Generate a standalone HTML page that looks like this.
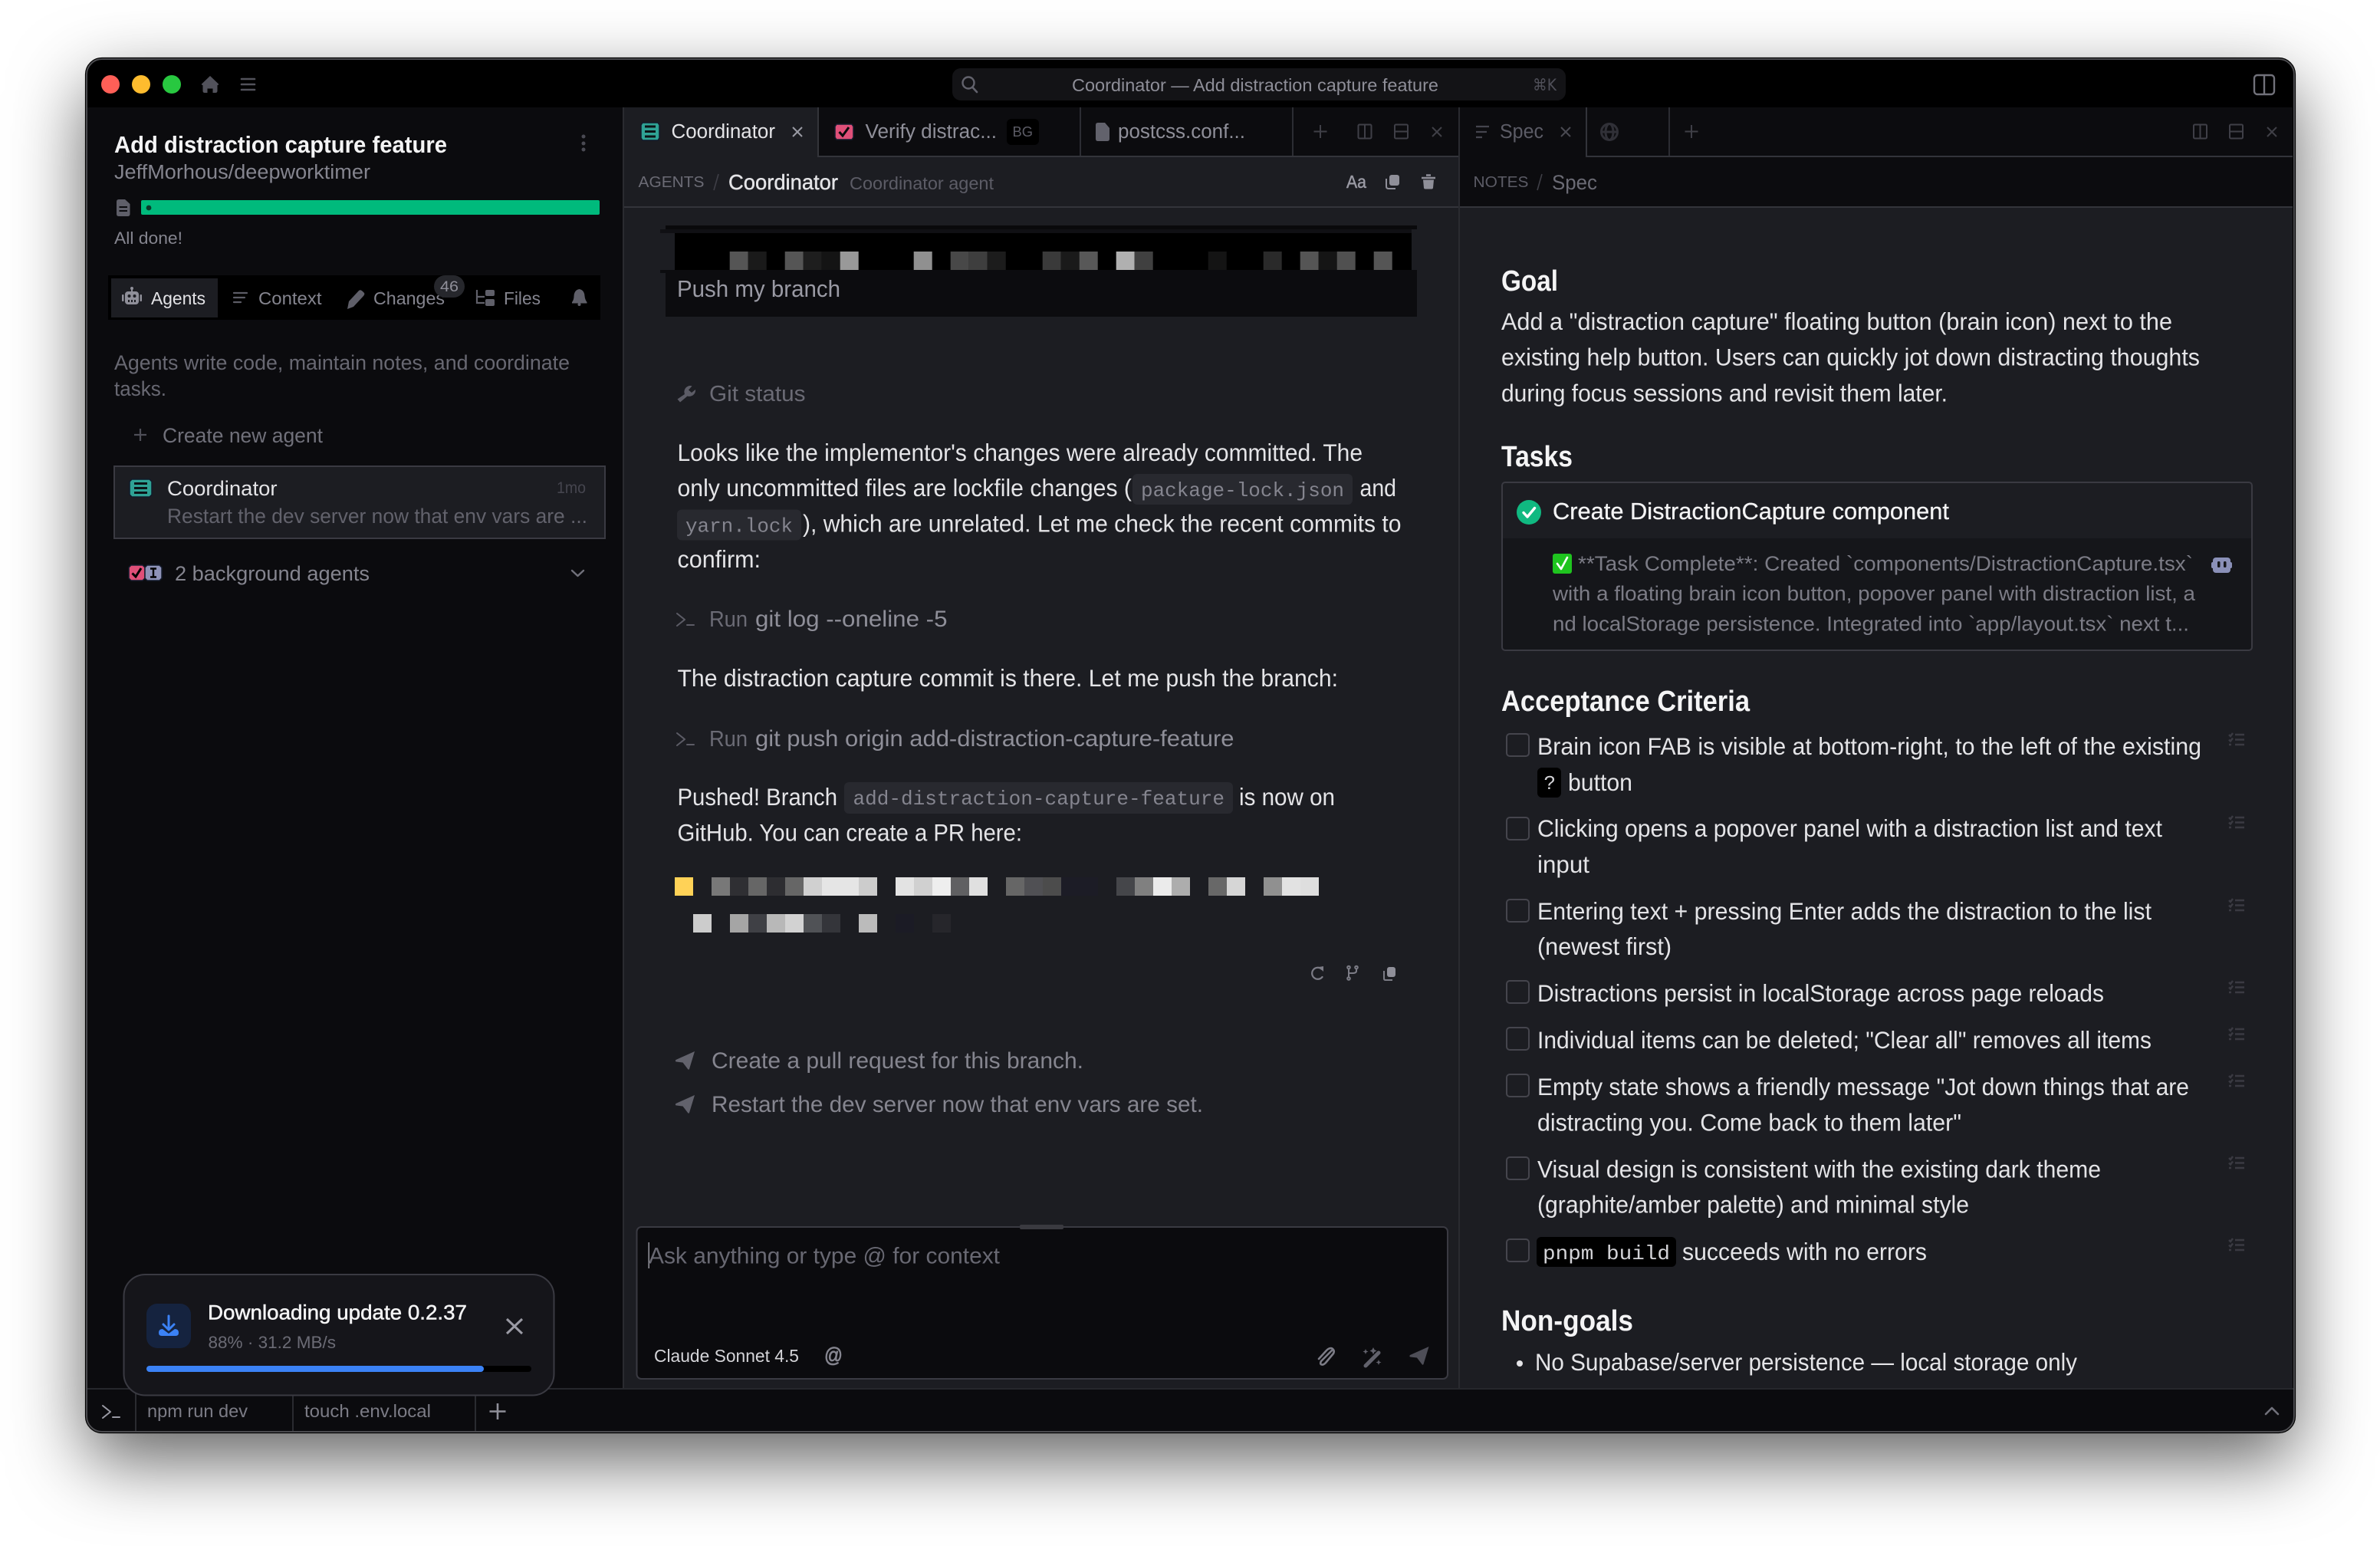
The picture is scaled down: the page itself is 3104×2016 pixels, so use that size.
<!DOCTYPE html>
<html lang="en"><head><meta charset="utf-8"><title>Coordinator — Add distraction capture feature</title>
<style>
html,body{margin:0;padding:0;background:#fff;width:3104px;height:2016px;overflow:hidden}
#shadow{position:absolute;left:112px;top:76px;width:2881px;height:1792px;border-radius:22px;box-shadow:0 36px 95px rgba(0,0,0,.62)}
svg{position:absolute;left:0;top:0}
text{font-family:"Liberation Sans",sans-serif;white-space:pre}
.m{font-family:"Liberation Mono",monospace}
.b{font-size:31.5px;fill:#e4e4e7}
.h{font-size:38px;font-weight:700;fill:#f4f4f5}
.s{font-size:27px;fill:#7c7c86}
.l{fill:none;stroke-linecap:round;stroke-linejoin:round}
</style></head><body>
<div id="shadow"></div>
<svg width="3104" height="2016" viewBox="0 0 3104 2016" xmlns="http://www.w3.org/2000/svg">
<defs>
<clipPath id="wc"><rect x="112" y="76" width="2881" height="1792" rx="21"/></clipPath>
<g id="splitv" fill="none" stroke="#3f3f47" stroke-width="2"><rect x="1" y="1" width="17" height="18" rx="1.5"/><path d="M9.5 1V19"/></g>
<g id="splith" fill="none" stroke="#3f3f47" stroke-width="2"><rect x="1" y="1" width="17" height="18" rx="1.5"/><path d="M1 10H18"/></g>
<path id="plane" d="M25 0 L0.5 11 Q-1 13 1 13.5 L9.5 14.5 L16 23 Q17 24.5 18 23 Z"/>
<g id="term" class="l" stroke-width="2"><path d="M0 0L10 8L0 16"/><path d="M13 15H22"/></g>
<g id="tasklist" fill="none" stroke="#3a3a42" stroke-width="2.4"><path d="M9 3H21M9 9.5H21M9 16H21"/><path d="M1 3l2 2 3-4M1 9.5l2 2 3-4M1 16h3"/></g>
<rect id="cb" width="29" height="29" rx="4" x="0" y="0" fill="none" stroke="#45454d" stroke-width="2"/>
</defs>
<g clip-path="url(#wc)">
<rect x="112" y="76" width="2881" height="1792" fill="#000"/>
<!-- Title bar -->
<circle cx="144" cy="110" r="12" fill="#ff5f57"/><circle cx="184" cy="110" r="12" fill="#febc2e"/><circle cx="224" cy="110" r="12" fill="#28c840"/>
<path d="M274 99 L285 109.5 Q285.5 111 283.5 111 V118.5 Q283.5 121 281 121 H277.5 V115.5 H270.5 V121 H267 Q264.5 121 264.5 118.5 V111 Q262.5 111 263 109.5 Z" fill="#52525b"/>
<path d="M315 103H332M315 110H332M315 117H332" stroke="#52525b" stroke-width="2.6" stroke-linecap="round"/>
<rect x="1242" y="89" width="800" height="42" rx="11" fill="#131316"/>
<circle cx="1263" cy="108" r="7.5" fill="none" stroke="#62626c" stroke-width="2.4"/><path d="M1268.5 114L1274 120" stroke="#62626c" stroke-width="2.6" stroke-linecap="round"/>
<text x="1398" y="119" font-size="23.5" fill="#8e8e98" textLength="478" lengthAdjust="spacingAndGlyphs">Coordinator — Add distraction capture feature</text>
<text x="1999" y="118" font-size="21" fill="#4f4f58" style="font-family:'DejaVu Sans',sans-serif" textLength="31" lengthAdjust="spacingAndGlyphs">⌘K</text>
<rect x="2940" y="98" width="26" height="25" rx="4" fill="none" stroke="#71717a" stroke-width="2.4"/><path d="M2953 98V123" stroke="#71717a" stroke-width="2.4"/>
<!-- Sidebar -->
<rect x="112" y="140" width="700" height="1670" fill="#0b0b0e"/>
<rect x="812" y="140" width="2" height="1670" fill="#2a2b30"/>
<text x="149" y="199" font-size="30.5" font-weight="700" fill="#f4f4f5" textLength="434" lengthAdjust="spacingAndGlyphs">Add distraction capture feature</text>
<text x="149" y="233" font-size="25.5" fill="#85858f" textLength="334" lengthAdjust="spacingAndGlyphs">JeffMorhous/deepworktimer</text>
<circle cx="761" cy="178" r="2.5" fill="#4a4a53"/><circle cx="761" cy="187" r="2.5" fill="#4a4a53"/><circle cx="761" cy="195" r="2.5" fill="#4a4a53"/>
<path d="M155 260 H163 L169.5 266 V279 Q169.5 282 166.5 282 H155 Q152 282 152 279 V263 Q152 260 155 260Z" fill="#5f5f69"/><path d="M155.5 270H166M155.5 275H166" stroke="#0b0b0e" stroke-width="2"/>
<rect x="184" y="261" width="598" height="19" rx="2" fill="#00ba7c"/>
<circle cx="194" cy="271" r="3.4" fill="#0b3a2a"/>
<text x="149" y="318" font-size="22.5" fill="#85858f" textLength="89" lengthAdjust="spacingAndGlyphs">All done!</text>
<rect x="141" y="359" width="642" height="58" fill="#000"/>
<rect x="145" y="363" width="139" height="51" fill="#1c1d22"/>
<!-- robot -->
<g fill="#8f8f99"><rect x="163" y="380" width="18" height="17" rx="4"/><rect x="159" y="384" width="2.5" height="9" rx="1"/><rect x="182.5" y="384" width="2.5" height="9" rx="1"/><rect x="171" y="376" width="2" height="5"/><circle cx="172" cy="376" r="2"/></g>
<g fill="#1c1d22"><circle cx="168.5" cy="386" r="2"/><circle cx="175.5" cy="386" r="2"/><rect x="167" y="391" width="2" height="3"/><rect x="171" y="391" width="2" height="3"/><rect x="175" y="391" width="2" height="3"/></g>
<text x="197" y="397" font-size="23.5" fill="#e4e4e7" textLength="71" lengthAdjust="spacingAndGlyphs">Agents</text>
<path d="M305 382H322M305 388H319M305 394H314" stroke="#5c5c66" stroke-width="2.2" stroke-linecap="round"/>
<text x="337" y="397" font-size="23.5" fill="#85858f" textLength="82.5" lengthAdjust="spacingAndGlyphs">Context</text>
<path d="M453 403 L455 393 L468 379 Q470 377 473 380 L475 382 Q476 384 474 386 L461 400 Z" fill="#5f5f69"/>
<text x="487" y="397" font-size="23.5" fill="#85858f" textLength="93" lengthAdjust="spacingAndGlyphs">Changes</text>
<rect x="566" y="359" width="40" height="29" rx="14.5" fill="#26272c"/>
<text x="574" y="380" font-size="19" fill="#8f8f99" textLength="24" lengthAdjust="spacingAndGlyphs">46</text>
<path d="M622 378V395H632M622 387H632" fill="none" stroke="#5f5f69" stroke-width="2.2"/><rect x="633" y="378" width="12" height="8" rx="2" fill="#5f5f69"/><rect x="633" y="390" width="12" height="9" rx="2" fill="#5f5f69"/>
<text x="657" y="397" font-size="23.5" fill="#85858f" textLength="48" lengthAdjust="spacingAndGlyphs">Files</text>
<path d="M755.5 377 Q762 378 762.5 386 Q763 391 765.5 394 V395.5 H746 V394 Q748.5 391 748.5 386 Q749 378 755.5 377Z" fill="#5f5f69"/><circle cx="755.5" cy="397" r="2" fill="#5f5f69"/>
<text x="149" y="482" font-size="27" fill="#686872" textLength="594" lengthAdjust="spacingAndGlyphs">Agents write code, maintain notes, and coordinate</text>
<text x="149" y="516" font-size="27" fill="#686872" textLength="68" lengthAdjust="spacingAndGlyphs">tasks.</text>
<path d="M183 559V575M175 567H191" stroke="#4e4e57" stroke-width="2.2"/>
<text x="212" y="577" font-size="26.5" fill="#70707a" textLength="209" lengthAdjust="spacingAndGlyphs">Create new agent</text>
<rect x="149" y="608" width="640" height="94" fill="#1c1d22" stroke="#3a3a42" stroke-width="2"/>
<path d="M172 625H195L198 628V645L195 648H172L169 645V628Z" fill="#2fa295" stroke="#111a2a" stroke-width="1.5"/>
<path d="M175 630.5H192M175 636.5H192M175 642.5H192" stroke="#0c1418" stroke-width="3"/>
<text x="218" y="646" font-size="26.5" fill="#e4e4e7" textLength="143.5" lengthAdjust="spacingAndGlyphs">Coordinator</text>
<text x="726" y="643" font-size="21.5" fill="#45454e" textLength="38" lengthAdjust="spacingAndGlyphs">1mo</text>
<text x="218" y="682" font-size="26.5" fill="#62626c" textLength="548" lengthAdjust="spacingAndGlyphs">Restart the dev server now that env vars are ...</text>
<path d="M171 737H186L189 740V754L186 757H171L168 754V740Z" fill="#df4f78" stroke="#151c2e" stroke-width="1.5"/>
<path d="M172.5 747.5L177 752L184 741" fill="none" stroke="#000" stroke-width="3"/>
<path d="M192 737H208L211 740V754L208 757H192L189 754V740Z" fill="#8f93b8" stroke="#151c2e" stroke-width="1.5"/>
<path d="M196 741.5H204M200 741.5V752.5M196 752.5H204" fill="none" stroke="#000" stroke-width="2.4"/>
<text x="228" y="757" font-size="26.5" fill="#85858f" textLength="254" lengthAdjust="spacingAndGlyphs">2 background agents</text>
<path class="l" d="M746 744L753.5 751L761 744" stroke="#70707a" stroke-width="2.4"/>
<!-- Center panel -->
<rect x="814" y="140" width="1088" height="1670" fill="#1c1d22"/>
<rect x="1066" y="140" width="836" height="63" fill="#0c0c0f"/>
<rect x="1066" y="140" width="2" height="64" fill="#33343a"/><rect x="1408" y="140" width="2" height="64" fill="#2c2d33"/><rect x="1685" y="140" width="2" height="64" fill="#2c2d33"/>
<rect x="1066" y="203" width="838" height="2" fill="#33343a"/>
<rect x="814" y="269" width="2176" height="2" fill="#33343a"/>
<rect x="1902" y="140" width="2" height="1670" fill="#2a2b30"/>
<path d="M838 160H858L860 163V180L858 183H838L836 180V163Z" fill="#2fa295" stroke="#111a2a" stroke-width="1.5"/>
<path d="M841 165H855M841 171.5H855M841 178H855" stroke="#0c1418" stroke-width="3"/>
<text x="875.5" y="180" font-size="25.5" fill="#e4e4e7" textLength="135.5" lengthAdjust="spacingAndGlyphs">Coordinator</text>
<path d="M1034 166L1046 178M1046 166L1034 178" stroke="#9a9aa4" stroke-width="2"/>
<path d="M1091 162H1111L1113 165V179L1111 182H1091L1089 179V165Z" fill="#df4f78" stroke="#151c2e" stroke-width="1.5"/>
<path d="M1094.5 172L1099 177L1107 166" fill="none" stroke="#0a0a0c" stroke-width="3"/>
<text x="1128.5" y="180" font-size="25.5" fill="#8f8f99" textLength="171.5" lengthAdjust="spacingAndGlyphs">Verify distrac...</text>
<rect x="1313" y="155" width="42" height="34" rx="6" fill="#000"/>
<text x="1320.5" y="178" font-size="18" fill="#5c5c66" textLength="26.5" lengthAdjust="spacingAndGlyphs">BG</text>
<path d="M1432 160H1441L1447 167V181Q1447 184 1444 184H1432Q1429 184 1429 181V163Q1429 160 1432 160Z" fill="#62626c"/>
<text x="1458" y="180" font-size="25.5" fill="#8f8f99" textLength="166" lengthAdjust="spacingAndGlyphs">postcss.conf...</text>
<path d="M1722 163V180M1713.5 171.5H1730.5" stroke="#3f3f47" stroke-width="2"/>
<use href="#splitv" x="1770.5" y="161.5"/><use href="#splith" x="1818" y="161.5"/>
<path d="M1868 166L1880 178M1880 166L1868 178" stroke="#3f3f47" stroke-width="2"/>
<!-- Breadcrumb center -->
<text x="832.5" y="244" font-size="20.5" fill="#6b6b75" textLength="86" lengthAdjust="spacingAndGlyphs">AGENTS</text>
<path d="M937 227L931 248" stroke="#3f3f47" stroke-width="1.6"/>
<text x="950" y="247" font-size="27.5" fill="#e4e4e7" stroke="#e4e4e7" stroke-width=".4" textLength="143" lengthAdjust="spacingAndGlyphs">Coordinator</text>
<text x="1108" y="247" font-size="23" fill="#5c5c66" textLength="188" lengthAdjust="spacingAndGlyphs">Coordinator agent</text>
<text x="1756" y="245" font-size="23" fill="#9a9aa4" stroke="#9a9aa4" stroke-width=".5" textLength="26" lengthAdjust="spacingAndGlyphs">Aa</text>
<rect x="1812" y="228" width="13" height="14" rx="3" fill="#8f8f99"/><path d="M1808 233V243Q1808 246 1811 246H1820" fill="none" stroke="#8f8f99" stroke-width="2"/>
<path d="M1854 232H1872M1860 228.5H1866" stroke="#8f8f99" stroke-width="2.4"/><path d="M1856 234.5H1870L1869 245Q1868.8 246.5 1867 246.5H1859Q1857.2 246.5 1857 245Z" fill="#8f8f99"/>
<!-- User message -->
<rect x="868" y="294" width="980" height="5" fill="#09090b"/>
<rect x="861" y="299" width="980" height="5" fill="#101014"/>
<rect x="880" y="304" width="961" height="48" fill="#000"/>
<rect x="868" y="352" width="980" height="61" fill="#0c0c0f"/>
<rect x="861" y="352" width="7" height="4" fill="#0c0c0f"/>
<g>
<rect x="951.7" y="328" width="24" height="24" fill="#555"/><rect x="975.7" y="328" width="24" height="24" fill="#1a1a1a"/>
<rect x="1023.7" y="328" width="24" height="24" fill="#555"/><rect x="1047.7" y="328" width="24" height="24" fill="#1e1e1e"/><rect x="1071.7" y="328" width="24" height="24" fill="#141414"/><rect x="1095.7" y="328" width="24" height="24" fill="#999"/>
<rect x="1191.7" y="328" width="24" height="24" fill="#909090"/>
<rect x="1239.7" y="328" width="24" height="24" fill="#484848"/><rect x="1263.7" y="328" width="24" height="24" fill="#3e3e3e"/><rect x="1287.7" y="328" width="24" height="24" fill="#1c1c1c"/>
<rect x="1359.7" y="328" width="24" height="24" fill="#3a3a3a"/><rect x="1383.7" y="328" width="24" height="24" fill="#1a1a1a"/><rect x="1407.7" y="328" width="24" height="24" fill="#585858"/>
<rect x="1455.7" y="328" width="24" height="24" fill="#b0b0b0"/><rect x="1479.7" y="328" width="24" height="24" fill="#404040"/>
<rect x="1575.7" y="328" width="24" height="24" fill="#141414"/>
<rect x="1647.7" y="328" width="24" height="24" fill="#2a2a2a"/>
<rect x="1695.7" y="328" width="24" height="24" fill="#555"/><rect x="1719.7" y="328" width="24" height="24" fill="#151515"/><rect x="1743.7" y="328" width="24" height="24" fill="#505050"/>
<rect x="1791.7" y="328" width="24" height="24" fill="#555"/>
</g>
<text x="883" y="387" font-size="30.5" fill="#9a9aa4" textLength="213" lengthAdjust="spacingAndGlyphs">Push my branch</text>
<!-- Chat -->
<path d="M901 503 A8 8 0 0 0 893 514 L883.5 520.5 L887 524.5 L896.5 516.5 A8 8 0 0 0 907 508 L902 512 L898 508.5 L902.5 503.5 Z" fill="#5c5c66"/>
<text x="925" y="523" font-size="29" fill="#6b6b75" textLength="125.5" lengthAdjust="spacingAndGlyphs">Git status</text>
<text x="883.5" y="601" class="b" textLength="893.5" lengthAdjust="spacingAndGlyphs">Looks like the implementor's changes were already committed. The</text>
<text x="883.5" y="647" class="b" textLength="592.5" lengthAdjust="spacingAndGlyphs">only uncommitted files are lockfile changes (</text>
<rect x="1477" y="618" width="287" height="40" rx="6" fill="#28292f"/>
<text x="1488" y="647" class="m" font-size="26" fill="#85858f" textLength="265" lengthAdjust="spacingAndGlyphs">package-lock.json</text>
<text x="1773.5" y="647" class="b" textLength="47.5" lengthAdjust="spacingAndGlyphs">and</text>
<rect x="883" y="664.5" width="162" height="40" rx="6" fill="#28292f"/>
<text x="894" y="693.5" class="m" font-size="26" fill="#85858f" textLength="140" lengthAdjust="spacingAndGlyphs">yarn.lock</text>
<text x="1047" y="693.5" class="b" textLength="780.5" lengthAdjust="spacingAndGlyphs">), which are unrelated. Let me check the recent commits to</text>
<text x="883.5" y="740" class="b" textLength="108.5" lengthAdjust="spacingAndGlyphs">confirm:</text>
<use href="#term" x="883" y="800" stroke="#5c5c66"/>
<text x="925" y="817" font-size="29" fill="#6b6b75" textLength="50" lengthAdjust="spacingAndGlyphs">Run</text>
<text x="985" y="817" font-size="29.5" fill="#8f8f99" textLength="250.5" lengthAdjust="spacingAndGlyphs">git log --oneline -5</text>
<text x="883.5" y="895" class="b" textLength="861.5" lengthAdjust="spacingAndGlyphs">The distraction capture commit is there. Let me push the branch:</text>
<use href="#term" x="883" y="956" stroke="#5c5c66"/>
<text x="925" y="973" font-size="29" fill="#6b6b75" textLength="50" lengthAdjust="spacingAndGlyphs">Run</text>
<text x="985" y="973" font-size="29.5" fill="#8f8f99" textLength="624.5" lengthAdjust="spacingAndGlyphs">git push origin add-distraction-capture-feature</text>
<text x="883.5" y="1050" class="b" textLength="208.5" lengthAdjust="spacingAndGlyphs">Pushed! Branch</text>
<rect x="1101" y="1020" width="507" height="41" rx="6" fill="#28292f"/>
<text x="1112.5" y="1049" class="m" font-size="26" fill="#85858f" textLength="484.5" lengthAdjust="spacingAndGlyphs">add-distraction-capture-feature</text>
<text x="1616" y="1050" class="b" textLength="125" lengthAdjust="spacingAndGlyphs">is now on</text>
<text x="883.5" y="1096.5" class="b" textLength="449.5" lengthAdjust="spacingAndGlyphs">GitHub. You can create a PR here:</text>
<g>
<rect x="880" y="1144" width="24" height="24" fill="#ffd257"/>
<rect x="928" y="1144" width="24" height="24" fill="#787878"/><rect x="952" y="1144" width="24" height="24" fill="#2f2f33"/><rect x="976" y="1144" width="24" height="24" fill="#666"/><rect x="1000" y="1144" width="24" height="24" fill="#2d2d31"/><rect x="1024" y="1144" width="24" height="24" fill="#666"/><rect x="1048" y="1144" width="24" height="24" fill="#d0d0d0"/><rect x="1072" y="1144" width="24" height="24" fill="#e5e5e5"/><rect x="1096" y="1144" width="24" height="24" fill="#e5e5e5"/><rect x="1120" y="1144" width="24" height="24" fill="#ccc"/>
<rect x="1168" y="1144" width="24" height="24" fill="#e3e3e3"/><rect x="1192" y="1144" width="24" height="24" fill="#d0d0d0"/><rect x="1216" y="1144" width="24" height="24" fill="#eee"/><rect x="1240" y="1144" width="24" height="24" fill="#606062"/><rect x="1264" y="1144" width="24" height="24" fill="#e0e0e0"/>
<rect x="1312" y="1144" width="24" height="24" fill="#666"/><rect x="1336" y="1144" width="24" height="24" fill="#505054"/><rect x="1360" y="1144" width="24" height="24" fill="#4c4c4c"/><rect x="1384" y="1144" width="48" height="24" fill="#1c1c26"/>
<rect x="1456" y="1144" width="24" height="24" fill="#45464a"/><rect x="1480" y="1144" width="24" height="24" fill="#808080"/><rect x="1504" y="1144" width="24" height="24" fill="#ebebeb"/><rect x="1528" y="1144" width="24" height="24" fill="#adadad"/>
<rect x="1576" y="1144" width="24" height="24" fill="#686868"/><rect x="1600" y="1144" width="24" height="24" fill="#d6d6d6"/>
<rect x="1648" y="1144" width="24" height="24" fill="#909090"/><rect x="1672" y="1144" width="24" height="24" fill="#e2e2e2"/><rect x="1696" y="1144" width="24" height="24" fill="#dedede"/>
<rect x="904" y="1192" width="24" height="24" fill="#ccc"/><rect x="952" y="1192" width="24" height="24" fill="#a5a5a5"/><rect x="976" y="1192" width="24" height="24" fill="#3f4045"/><rect x="1000" y="1192" width="24" height="24" fill="#b8b8b8"/><rect x="1024" y="1192" width="24" height="24" fill="#d2d2d2"/><rect x="1048" y="1192" width="24" height="24" fill="#505256"/><rect x="1072" y="1192" width="24" height="24" fill="#34353a"/><rect x="1120" y="1192" width="24" height="24" fill="#bbb"/><rect x="1168" y="1192" width="24" height="24" fill="#1b1b25"/><rect x="1216" y="1192" width="24" height="24" fill="#26262b"/>
</g>
<path class="l" d="M1724 1264 A7.5 7.5 0 1 0 1724.5 1274" stroke="#7c7c86" stroke-width="2.2"/><path d="M1720 1261L1726 1260V1267Z" fill="#7c7c86"/>
<g class="l" stroke="#7c7c86" stroke-width="2"><circle cx="1759" cy="1261.5" r="1.8"/><circle cx="1769" cy="1261.5" r="1.8"/><circle cx="1759" cy="1276" r="1.8"/><path d="M1759 1263.5V1274M1769 1263.5V1266Q1769 1269 1764 1269H1759"/></g>
<rect x="1809" y="1261" width="11" height="13" rx="3" fill="#8f8f99"/><path d="M1805 1266V1276Q1805 1278 1807 1278H1816" fill="none" stroke="#7c7c86" stroke-width="2"/>
<use href="#plane" x="881" y="1371" fill="#62626c"/>
<text x="928" y="1393" font-size="29.5" fill="#85858f" textLength="485" lengthAdjust="spacingAndGlyphs">Create a pull request for this branch.</text>
<use href="#plane" x="881" y="1428" fill="#62626c"/>
<text x="928" y="1450" font-size="29.5" fill="#85858f" textLength="641" lengthAdjust="spacingAndGlyphs">Restart the dev server now that env vars are set.</text>
<!-- Input -->
<rect x="830.5" y="1600" width="1057.5" height="198" rx="6" fill="#0b0b0e" stroke="#3a3a42" stroke-width="2"/>
<rect x="1330" y="1597" width="57" height="6" rx="2" fill="#3a3a40"/>
<rect x="845.5" y="1620" width="1.4" height="34" fill="#a1a1aa"/>
<text x="846" y="1647.5" font-size="29.5" fill="#686872" textLength="458" lengthAdjust="spacingAndGlyphs">Ask anything or type @ for context</text>
<text x="853" y="1776" font-size="23" fill="#d4d4d8" textLength="189" lengthAdjust="spacingAndGlyphs">Claude Sonnet 4.5</text>
<text x="1075" y="1776" font-size="27" fill="#85858f" stroke="#85858f" stroke-width=".8" textLength="24" lengthAdjust="spacingAndGlyphs">@</text>
<path class="l" d="M1737 1761 L1723 1775 Q1721 1779 1724 1779.5 Q1726 1780 1729 1777 L1739 1765 Q1741 1761 1737.5 1758.5 Q1734 1757 1730 1761 L1720 1772" stroke="#7c7c86" stroke-width="2.6"/>
<path d="M1781 1781L1798 1764" stroke="#62626c" stroke-width="5" stroke-linecap="round"/><path d="M1791 1757l1.5 3 3 1.5-3 1.5-1.5 3-1.5-3-3-1.5 3-1.5zM1781 1759l1 2.5 2.5 1-2.5 1-1 2.5-1-2.5-2.5-1 2.5-1zM1798 1773l1 2.5 2.5 1-2.5 1-1 2.5-1-2.5-2.5-1 2.5-1z" fill="#62626c"/>
<use href="#plane" x="1838.5" y="1756" fill="#4e4e57"/>
<!-- Right panel -->
<rect x="1904" y="140" width="1086" height="129" fill="#0c0c0f"/>
<rect x="1904" y="271" width="1086" height="1539" fill="#1c1d22"/>
<rect x="2068" y="140" width="2" height="64" fill="#33343a"/><rect x="2176" y="140" width="2" height="64" fill="#2c2d33"/>
<rect x="2068" y="203" width="922" height="2" fill="#33343a"/>
<path d="M1925 165H1942M1925 172H1939M1925 179H1933" stroke="#45454e" stroke-width="2.2"/>
<text x="1956" y="180" font-size="25.5" fill="#5c5c66" textLength="57" lengthAdjust="spacingAndGlyphs">Spec</text>
<path d="M2036 166L2048 178M2048 166L2036 178" stroke="#4a4a52" stroke-width="2"/>
<g fill="none" stroke="#303037" stroke-width="3"><circle cx="2099" cy="172" r="10.5"/><ellipse cx="2099" cy="172" rx="5" ry="10.5"/><path d="M2088 172H2110"/></g>
<path d="M2206 163V180M2197.5 171.5H2214.5" stroke="#3f3f47" stroke-width="2"/>
<use href="#splitv" x="2860" y="161.5"/><use href="#splith" x="2907" y="161.5"/>
<path d="M2957 166L2969 178M2969 166L2957 178" stroke="#3f3f47" stroke-width="2"/>
<text x="1921.5" y="244" font-size="20.5" fill="#5c5c66" textLength="72" lengthAdjust="spacingAndGlyphs">NOTES</text>
<path d="M2011 227L2005 248" stroke="#3f3f47" stroke-width="1.6"/>
<text x="2024" y="247" font-size="26.5" fill="#6b6b75" textLength="59" lengthAdjust="spacingAndGlyphs">Spec</text>
<text x="1958" y="379" class="h" textLength="74" lengthAdjust="spacingAndGlyphs">Goal</text>
<text x="1958" y="430" class="b" textLength="875" lengthAdjust="spacingAndGlyphs">Add a "distraction capture" floating button (brain icon) next to the</text>
<text x="1958" y="476.5" class="b" textLength="911" lengthAdjust="spacingAndGlyphs">existing help button. Users can quickly jot down distracting thoughts</text>
<text x="1958" y="523.5" class="b" textLength="582" lengthAdjust="spacingAndGlyphs">during focus sessions and revisit them later.</text>
<text x="1958" y="608" class="h" textLength="93" lengthAdjust="spacingAndGlyphs">Tasks</text>
<rect x="1959" y="629" width="978" height="219" rx="4" fill="#1c1d22"/>
<path d="M1959 702H2937V844Q2937 848 2933 848H1963Q1959 848 1959 844Z" fill="#15161a"/>
<rect x="1959" y="629" width="978" height="219" rx="4" fill="none" stroke="#3a3a42" stroke-width="2"/>
<circle cx="1994" cy="668" r="16" fill="#10b981"/><path class="l" d="M1987 668.5L1992 674L2001.5 662.5" stroke="#fff" stroke-width="3.4"/>
<text x="2025" y="677" font-size="30.5" fill="#f4f4f5" stroke="#f4f4f5" stroke-width=".3" textLength="517" lengthAdjust="spacingAndGlyphs">Create DistractionCapture component</text>
<rect x="2025" y="722" width="25" height="26" rx="3" fill="#1fc41f"/><path class="l" d="M2031 735L2036 742L2044 727" stroke="#fff" stroke-width="2.6"/>
<text x="2058" y="744" font-size="27" fill="#7c7c86" textLength="802" lengthAdjust="spacingAndGlyphs">**Task Complete**: Created `components/DistractionCapture.tsx`</text>
<rect x="2886" y="727" width="23" height="20" rx="4" fill="#8a90b8"/><rect x="2884" y="733" width="27" height="8" rx="2" fill="#8a90b8"/><rect x="2892" y="732" width="3.5" height="8" rx="1.5" fill="#15161a"/><rect x="2900" y="732" width="3.5" height="8" rx="1.5" fill="#15161a"/>
<text x="2025" y="783" font-size="27" fill="#7c7c86" textLength="838" lengthAdjust="spacingAndGlyphs">with a floating brain icon button, popover panel with distraction list, a</text>
<text x="2025" y="822.5" font-size="27" fill="#7c7c86" textLength="830" lengthAdjust="spacingAndGlyphs">nd localStorage persistence. Integrated into `app/layout.tsx` next t...</text>
<text x="1958" y="927" class="h" textLength="324" lengthAdjust="spacingAndGlyphs">Acceptance Criteria</text>
<use href="#cb" x="1965" y="957"/><use href="#tasklist" x="2906" y="955"/>
<text x="2005" y="984" class="b" textLength="866" lengthAdjust="spacingAndGlyphs">Brain icon FAB is visible at bottom-right, to the left of the existing</text>
<rect x="2005" y="1001" width="31" height="39" rx="6" fill="#000"/>
<text x="2013.5" y="1029" class="m" font-size="26" fill="#d4d4d8" textLength="15.5" lengthAdjust="spacingAndGlyphs">?</text>
<text x="2045" y="1031" class="b" textLength="84" lengthAdjust="spacingAndGlyphs">button</text>
<use href="#cb" x="1965" y="1066"/><use href="#tasklist" x="2906" y="1063"/>
<text x="2005" y="1091" class="b" textLength="815" lengthAdjust="spacingAndGlyphs">Clicking opens a popover panel with a distraction list and text</text>
<text x="2005" y="1138" class="b" textLength="68" lengthAdjust="spacingAndGlyphs">input</text>
<use href="#cb" x="1965" y="1173"/><use href="#tasklist" x="2906" y="1171"/>
<text x="2005" y="1199" class="b" textLength="801" lengthAdjust="spacingAndGlyphs">Entering text + pressing Enter adds the distraction to the list</text>
<text x="2005" y="1245" class="b" textLength="175" lengthAdjust="spacingAndGlyphs">(newest first)</text>
<use href="#cb" x="1965" y="1279"/><use href="#tasklist" x="2906" y="1278"/>
<text x="2005" y="1306" class="b" textLength="739" lengthAdjust="spacingAndGlyphs">Distractions persist in localStorage across page reloads</text>
<use href="#cb" x="1965" y="1340"/><use href="#tasklist" x="2906" y="1339"/>
<text x="2005" y="1367" class="b" textLength="801" lengthAdjust="spacingAndGlyphs">Individual items can be deleted; "Clear all" removes all items</text>
<use href="#cb" x="1965" y="1401"/><use href="#tasklist" x="2906" y="1400"/>
<text x="2005" y="1428" class="b" textLength="850" lengthAdjust="spacingAndGlyphs">Empty state shows a friendly message "Jot down things that are</text>
<text x="2005" y="1474.5" class="b" textLength="553" lengthAdjust="spacingAndGlyphs">distracting you. Come back to them later"</text>
<use href="#cb" x="1965" y="1509"/><use href="#tasklist" x="2906" y="1507"/>
<text x="2005" y="1535.5" class="b" textLength="735" lengthAdjust="spacingAndGlyphs">Visual design is consistent with the existing dark theme</text>
<text x="2005" y="1581.5" class="b" textLength="563" lengthAdjust="spacingAndGlyphs">(graphite/amber palette) and minimal style</text>
<use href="#cb" x="1965" y="1616"/><use href="#tasklist" x="2906" y="1614"/>
<rect x="2004" y="1613" width="182" height="39" rx="6" fill="#000"/>
<text x="2012" y="1642" class="m" font-size="26" fill="#d4d4d8" textLength="166" lengthAdjust="spacingAndGlyphs">pnpm build</text>
<text x="2194" y="1643" class="b" textLength="319" lengthAdjust="spacingAndGlyphs">succeeds with no errors</text>
<text x="1958" y="1735" class="h" textLength="172" lengthAdjust="spacingAndGlyphs">Non-goals</text>
<circle cx="1982" cy="1778" r="4" fill="#e4e4e7"/>
<text x="2002" y="1787" class="b" textLength="707" lengthAdjust="spacingAndGlyphs">No Supabase/server persistence — local storage only</text>
<!-- Terminal bar -->
<rect x="112" y="1810" width="2881" height="58" fill="#0b0b0e"/>
<rect x="112" y="1810" width="2881" height="2" fill="#26272c"/>
<use href="#term" x="134" y="1833" stroke="#9a9aa4"/>
<rect x="176" y="1812" width="2" height="56" fill="#2a2b30"/><rect x="381" y="1812" width="2" height="56" fill="#2a2b30"/><rect x="619" y="1812" width="2" height="56" fill="#2a2b30"/>
<text x="192" y="1848" font-size="23" fill="#7c7c86" textLength="131" lengthAdjust="spacingAndGlyphs">npm run dev</text>
<text x="397" y="1848" font-size="23" fill="#7c7c86" textLength="165" lengthAdjust="spacingAndGlyphs">touch .env.local</text>
<path d="M649 1830V1851M638.5 1840.5H659.5" stroke="#8f8f99" stroke-width="2.6"/>
<path class="l" d="M2955 1844L2963 1836L2971 1844" stroke="#70707a" stroke-width="2.6"/>
<!-- Toast -->
<rect x="161.5" y="1662" width="561" height="157.5" rx="28" fill="#15151a" stroke="#3a3a42" stroke-width="2"/>
<rect x="191" y="1700" width="58" height="58" rx="14" fill="#15233f"/>
<path class="l" d="M220 1716V1734M213 1727L220 1734L227 1727" stroke="#3b82f6" stroke-width="3"/>
<path d="M207 1738Q207 1733 212 1733L220 1739L228 1733Q233 1733 233 1738Q233 1742 229 1742H211Q207 1742 207 1738Z" fill="#3b82f6"/>
<text x="271" y="1720.5" font-size="26.5" fill="#f4f4f5" stroke="#f4f4f5" stroke-width=".5" textLength="338" lengthAdjust="spacingAndGlyphs">Downloading update 0.2.37</text>
<text x="271.5" y="1758" font-size="22.5" fill="#6b6b75" textLength="166.5" lengthAdjust="spacingAndGlyphs">88% · 31.2 MB/s</text>
<path d="M661 1720L681 1739M681 1720L661 1739" stroke="#9a9aa4" stroke-width="3"/>
<rect x="191" y="1781" width="502" height="8" rx="4" fill="#000"/>
<rect x="191" y="1781" width="440" height="8" rx="4" fill="#3b82f6"/>
</g>
<rect x="113" y="77" width="2879" height="1790" rx="20" fill="none" stroke="#4e4e52" stroke-width="2"/>
<rect x="111.5" y="75.5" width="2882" height="1793" rx="21.5" fill="none" stroke="#000" stroke-width="1.2"/>
</svg>
</body></html>
